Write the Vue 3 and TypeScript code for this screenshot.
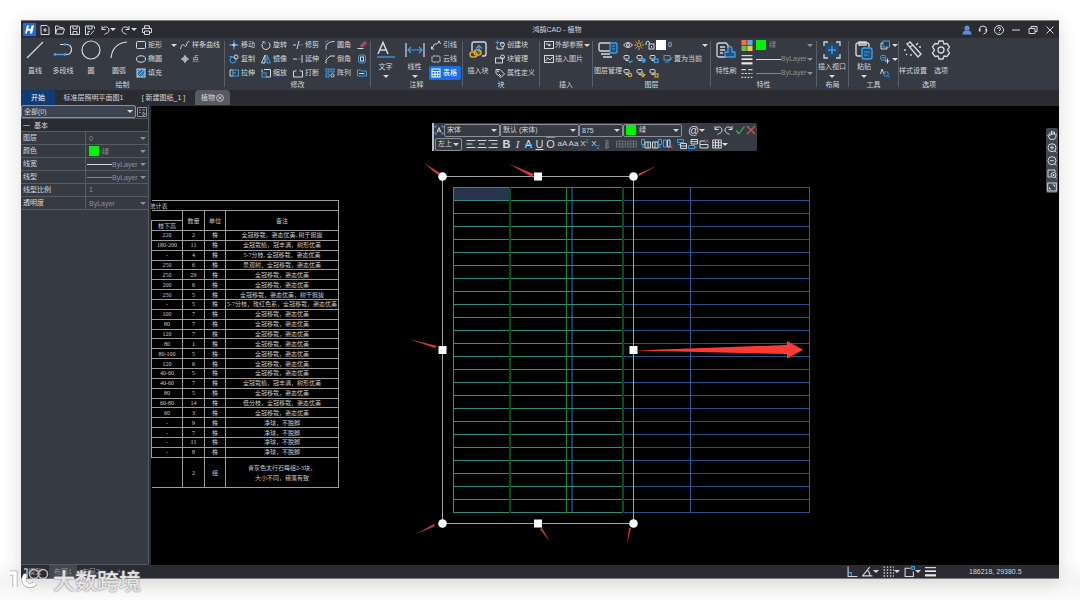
<script setup lang="ts">
interface Cmd { icon: string; label: string; caret?: boolean; active?: boolean }

const B = '#3b9fe8'
const Y = '#d9a63a'

const stack = (color: string, mark: string) =>
  `<rect x="1" y="1.5" width="5" height="3.5" rx="1"/><path d="M2.5 6.5h3"/><g stroke="${color}">${mark}</g>`

const icons: Record<string, string> = {
  line: `<path stroke-width="1.2" d="M2 18 18 2"/>`,
  pline: `<path stroke-width="1.2" d="M7 4.5h7a4.5 5 0 0 1 0 10H2"/><g fill="${B}" stroke="none"><circle cx="12" cy="4.5" r="1.3"/><circle cx="2" cy="14.5" r="1.4"/><circle cx="12" cy="14.5" r="1.4"/></g><path stroke="${B}" stroke-width="1.5" d="M2 14.5h10"/>`,
  circle: `<circle cx="10" cy="10" r="9" stroke-width="1.2"/>`,
  arc: `<path stroke-width="1.2" d="M2 18C3 9 8 3 18 2"/>`,
  rect: `<rect x=".5" y="1.5" width="9" height="7" rx="1"/>`,
  ellipse: `<ellipse cx="5" cy="5" rx="4.5" ry="3.2"/>`,
  hatch: `<rect x="1" y="1" width="8" height="8" fill="#2474ad"/><path stroke="#9fd0f5" stroke-width=".7" d="M1 5l4-4M1 9l8-8M5 9l4-4"/>`,
  spline: `<path d="M.5 9C3-1 5 10 6.5 5S8 2 9.5 1.500"/>`,
  point: `<circle cx="5" cy="5" r="2.2"/><path d="M5 1v8M1 5h8"/>`,
  move: `<path stroke="${B}" d="M5 .5v9M.5 5h9" stroke-width="1.3"/><path d="M5 3v4M3 5h4"/>`,
  rotate: `<path d="M3 2a4 4 0 1 0 4.5.3"/><path stroke="${B}" d="M1 1.500h3v3"/>`,
  trim: `<path d="M0 5h3M6 1 4 9"/><path stroke="${B}" stroke-dasharray="1.5 1" d="M6 5h4"/>`,
  fillet: `<path d="M1 9.500V8C1 4 4 1.500 9.500 1.500"/><path stroke="${B}" stroke-dasharray="1.5 1" d="M1 5V1h3"/>`,
  chamfer: `<path d="M1 9.500V6l4-4h5"/><path stroke="${B}" stroke-dasharray="1 1" d="M1 4V2h2"/>`,
  copy: `<circle cx="4" cy="6" r="3" stroke="${B}"/><circle cx="7" cy="3" r="2"/><path stroke="${B}" d="M.5 2.500h3"/>`,
  mirror: `<path d="M4 1v8H.5z"/><path stroke="${B}" d="M6 1v8h3.500z"/>`,
  extend: `<path d="M0 5h4M9 1v8"/><path stroke="${B}" stroke-dasharray="1.5 1" d="M5 5h4"/>`,
  offset: `<rect x="1.5" y="1" width="7" height="8" rx="2" stroke="${B}"/><rect x="3.5" y="3" width="3" height="4"/>`,
  stretch: `<path d="M4 2H1v6h3"/><rect x="4" y="2" width="5.5" height="6" stroke="${B}"/><path stroke="${B}" d="M3 5h4"/>`,
  scale: `<path d="M3 1.500h6.500V9H5"/><path d="M1 4V1.500"/><rect x="1" y="5" width="4" height="4" stroke="${B}"/>`,
  break: `<path d="M3 3H.5v6h9V3H7"/><path stroke="${B}" d="M3 1.500v2M7 1.500v2"/>`,
  array: `<g stroke="${B}"><rect x="1" y="1" width="3" height="3"/><rect x="6" y="1" width="3" height="3"/><rect x="1" y="6" width="3" height="3"/></g><circle cx="7.5" cy="7.5" r="1.6"/>`,
  erase: `<path stroke="#d8437c" fill="#a83a68" d="M3.500 6 7.500 1.500l2 1.500L5.500 7z"/><path d="M.5 8.500h6"/>`,
  folder: `<path stroke="${B}" d="M.5 8V2h3l1 1h5v5z"/><path d="M2 5.500h5.500"/>`,
  text: `<path stroke-width="1.5" d="M2 14 7 2.500 12 14M4 10h6"/><path stroke="${B}" stroke-width="1.3" d="M1 17h18"/>`,
  linear: `<path stroke-width="1.2" d="M1 3v14M19 3v14"/><path stroke="${B}" stroke-width="1.2" d="M3 10h14M6 7l-3 3 3 3M14 7l3 3-3 3"/>`,
  leader: `<path d="M1 8.500 3.500 4 6 4M6.500 4 8 .8 9.500 4"/><path d="M.5 6.500V9H3"/>`,
  cloud: `<rect x="1" y="2" width="8" height="6" rx="1" stroke-dasharray="2.5 .7"/>`,
  table: `<rect x="1" y="1" width="8" height="8" stroke="#fff"/><path stroke="#fff" d="M1 3.500h8M4 3.500V9M6.500 3.500V9M1 6.300h8"/>`,
  insblock: `<path stroke-width="1.4" d="M4 11V4q0-2 2-2h10q2 0 2 2v10q0 2-2 2h-2"/><path stroke="${B}" stroke-width="1.4" d="M11 13V6M8 8.500 11 5.500l3 3"/><g stroke="${Y}" stroke-width="1.5"><rect x="2" y="12" width="7" height="5" rx="2.5"/><rect x="6" y="10" width="7" height="5" rx="2.5"/></g>`,
  newblock: `<path stroke="${B}" d="M2.500.5v4M.5 2.500h4"/><path d="M2 6v3h6V6M5 3h4"/><circle cx="7.5" cy="4.5" r="2"/>`,
  blockmgr: `<rect x=".5" y="4" width="7" height="5"/><circle cx="7.5" cy="3" r="2"/>`,
  tag: `<path d="M1 1.500h4l4.500 4.500-3.500 3.500L1 5.500z"/><circle cx="3" cy="3.3" r=".6"/><path d="M4 6l2 2"/>`,
  xref: `<rect x=".5" y="1.5" width="9" height="7"/><path d="M2 4h2M4 5l2-1v2z"/>`,
  image: `<rect x=".5" y="1.5" width="9" height="7"/><path d="M1.500 7l2.500-3 2 2 2.500-3M2.500 3.300h1"/>`,
  layers: `<rect x="1" y="3" width="12" height="8" rx="1.5" stroke-width="1.4"/><path stroke-width="1.3" d="M3 14h9M5 17h9"/><rect x="12" y="3" width="7" height="10" rx="1" fill="#234d70" stroke="${B}" stroke-width="1.3"/><path stroke="${B}" d="M14 6h3M14 9h3"/>`,
  eye: `<path d="M.5 5Q5 0 9.500 5 5 10 .5 5z"/><circle cx="5" cy="5" r="1.5"/>`,
  sun: `<g stroke="${Y}"><circle cx="5" cy="5" r="2"/><path d="M5 0v2M5 8v2M0 5h2M8 5h2M1.500 1.500l1.300 1.300M7.200 7.200l1.300 1.300M8.500 1.500 7.200 2.800M2.800 7.200 1.500 8.500"/></g>`,
  lock: `<path d="M1 5V3a1.500 1.500 0 0 1 3.500 0v1"/><rect x="4" y="4" width="5" height="5"/><path d="M6.500 6v1.500"/>`,
  lyoff: stack(B, '<path stroke-width="1.2" d="M5 6.500q2 3 4.500 0M6 8.500h2"/>'),
  lyfrz: stack(B, `<circle cx="7.500" cy="6.500" r="1.900" fill="${B}"/>`),
  lylock: stack(B, '<rect x="5.5" y="5" width="3.5" height="3.5" stroke-width="1.2"/>'),
  lycur: `<rect x="1" y="1.5" width="6" height="4.5" stroke="${B}"/><path d="M2 8h4" stroke="${B}"/><path stroke="#35c46a" d="M4.500 5 6.500 7 9.500 3"/>`,
  lyon: stack(Y, '<circle cx="7" cy="7" r="1.7" stroke-width="1.2"/>'),
  lythaw: stack(Y, '<circle cx="7" cy="7" r="1.5"/><path d="M7 4.500v5M4.500 7h5"/>'),
  lyunl: stack(Y, '<path d="M5 6V5h2"/><rect x="6" y="6" width="3" height="3" stroke-width="1.2"/>'),
  match: `<path stroke-width="1.3" d="M10 17H3q-2 0-2-2V5q0-2 2-2h7l2 2v3M4 7h5M4 10h5M4 13h3"/><path stroke="${B}" fill="#245277" stroke-width="1.3" d="M9 17v-5h3V8q2-3 4 0v4h3v5z"/>`,
  palette: `<g stroke="none"><path fill="#f0703a" d="M0 0h4.700v4.700H0z"/><path fill="#5aa9e8" d="M5.300 0H10v4.700H5.300z"/><path fill="#6bbf5b" d="M0 5.300h4.700V10H0z"/><path fill="#f1c644" d="M5.300 5.300H10V10H5.300z"/></g>`,
  lweight: `<path stroke="#e8eaed" d="M0 1.500h10"/><path stroke="#e8eaed" stroke-width="1.5" d="M0 4.700h10"/><path stroke="#e8eaed" stroke-width="2" d="M0 8.500h10"/>`,
  ltype: `<path d="M0 1.500h4M6 1.500h4"/><path stroke-dasharray="2 1" d="M0 5h10"/><path stroke-dasharray="1.5 1.3" d="M0 8.500h10"/>`,
  viewport: `<rect x="3" y="3" width="14" height="14" fill="#244a69" stroke="none"/><path stroke="${B}" stroke-width="1.4" d="M10 6v8M6 10h8"/><path stroke-width="1.3" d="M2 6V2h4M14 2h4v4M18 14v4h-4M6 18H2v-4"/>`,
  paste: `<path stroke-width="1.4" d="M7 16H4q-2 0-2-2V5q0-2 2-2h9q2 0 2 2v2M5 2h7v3H5z"/><rect x="8" y="8" width="10" height="11" rx="2" fill="#244f74" stroke="${B}" stroke-width="1.4"/><path stroke="${B}" d="M10 12h6M10 15h4"/>`,
  dup: `<rect x="3" y="1" width="6.5" height="6" stroke="${B}"/><path d="M3 3H1v6h6V7"/>`,
  cut: `<rect x=".7" y="1.5" width="5" height="4.5" rx="1" stroke="${B}"/><path stroke="${B}" d="M2 3.700h3"/><path d="M5 7h4.500M7.500 4.500v5"/>`,
  find: `<path d="M.5 6 2 1l2 5"/><circle cx="6" cy="6" r="2.3" stroke="${B}"/><path stroke="${B}" d="M8 8l1.500 1.500"/>`,
  wand: `<path stroke-width="1.4" d="M4 4 7 2l11 12-3 3zM7 7l3-2"/><path stroke-width="1.4" d="M13 5l2-2M16 7h2M2 9v2M4 14l-1 1M8 14v2"/>`,
  gear: `<path stroke-width="1.3" d="M8 1h4l1 3 3-.5 2.500 3.500-2 3 2 3L16 16.500l-3-.5-1 3H8l-1-3-3 .5L1.500 13l2-3-2-3L4 3.500 7 4z"/><circle cx="10" cy="10" r="3" stroke-width="1.3"/>`,
  logo: `<rect width="10" height="10" rx=".6" fill="#2466de" stroke="none"/><path fill="#fff" stroke="none" d="M3 2h1.600L4 4.500h2L6.600 2h1.900L7 8H5.300l.4-2H3.500L3 8H1.500z"/>`,
  newf: `<path d="M1 .5h6l2 2v7H1zM5 3v4M3 5h4"/>`,
  open: `<path d="M.5 9V1h3l1 1.500H8V4M.5 9 2 4h7.500L8 9z"/>`,
  save: `<path d="M.5 1h8l1 1v7.500h-9zM3 1v3h4V1M3 9V6.500h4V9"/>`,
  saveas: `<path d="M4 9.500H.5V1h8l1 1v2M3 1v3h4V1M3 9V6.500h2M5.500 9.500 9 5.500"/>`,
  undo: `<path d="M2 1v3.500h3.500M2 4.500C4 .5 9 1.500 9 5S6 8 4.500 9.500"/>`,
  redo: `<path d="M8 1v3.500H4.500M8 4.500C6 .5 1 1.500 1 5s3 3 4.500 4.500"/>`,
  print: `<path d="M2.500 3.500V.8h5v2.700M2.500 7.500H.5v-4h9v4h-2M2.500 6h5v3.500h-5z"/>`,
  user: `<g fill="#5b8fd6" stroke="none"><circle cx="5" cy="3" r="2.6"/><path d="M.5 9.500q0-3.500 3-4h3q3 .5 3 4z"/></g>`,
  headset: `<path d="M1.500 6V4.500a3.500 3.500 0 0 1 7 0V6q0 2.500-3 3"/><path stroke-width="1.8" d="M1.700 4v2.500M8.300 4v2.500"/>`,
  help: `<circle cx="5" cy="5" r="4.5"/><path d="M3.500 4q0-1.500 1.500-1.500T6.500 4 5 5.800M5 7v.8"/>`,
  min: `<path d="M1 5h8"/>`,
  restore: `<path d="M1 3.500h6v5H1zM3 3.500v-2h6v5H7"/>`,
  close: `<path d="M1.500 1.500l7 7M8.500 1.500l-7 7"/>`,
  tabx: `<circle cx="5" cy="5" r="4.3"/><path d="M3 3l4 4M7 3 3 7"/>`,
  filter: `<path stroke="#8f949c" d="M.5.500h9v9h-9zM2 3h2M5.500 3H8M2 5.500h2M6 5l2.500 2L6 8.500z"/>`,
  hand: `<path d="M3 6V2.500M4.500 5V1M6 5V1M7.500 5V2M3 6 1.500 4.500.8 5.200 3 9.300h4.500Q9.300 8 9.200 3.500"/>`,
  zin: `<circle cx="5" cy="4.7" r="4"/><path d="M5 2.700v4M3 4.700h4M7.800 7.800l1.700 1.700"/>`,
  zout: `<circle cx="5" cy="4.7" r="4"/><path d="M3 4.700h4M7.800 7.800l1.700 1.700"/>`,
  zwin: `<path d="M4 8H1V1h7v2"/><circle cx="6.5" cy="6" r="2.5"/><path d="M6.500 5v2M5.500 6h2M8.300 8 9.700 9.500"/>`,
  zext: `<rect x=".7" y="1" width="8.6" height="8"/><path d="M5.800 3h1.700v1.700M4.200 7H2.500V5.300"/>`,
  tA: `<path stroke="${B}" d="M3 1H1v2M7 1h2v2M9 7v2H7M3 9H1V7"/><path d="M3 7.500 5 2.500l2 5M3.700 6h2.600"/>`,
  alL: `<path d="M.5 1.500h9M.5 5h6M.5 8.500h9"/>`,
  alC: `<path d="M.5 1.500h9M2 5h6M.5 8.500h9"/>`,
  alR: `<path d="M.5 1.500h9M3.500 5h6M.5 8.500h9"/>`,
  frac: `<g stroke="#7d828b"><circle cx="5" cy="2.5" r="1.3"/><path d="M3 5h4M4 6v3.500"/><circle cx="5.300" cy="8" r="1.2"/></g>`,
  merge: `<path stroke="#676c75" d="M.5 2h9v6h-9zM.5 5h9M3.500 2v6M6.500 2v6"/>`,
  colL: `<path stroke="${B}" d="M.5.500h3v5h-3zM2 5.500V9"/><path d="M4 3h5.500v6H4zM7 3v6"/>`,
  colR: `<path d="M.5 3H6v6H.5zM3 3v6"/><path stroke="${B}" d="M6.500.5h3v5h-3zM8 6v3"/>`,
  colX: `<path stroke="${B}" d="M.5 1h3v7h-3z"/><path d="M4.500 1H7v7H4.500z"/><path stroke="#d9574f" d="M6 6l3.500 3.500M9.500 6 6 9.500"/>`,
  rowA: `<path stroke="${B}" d="M.5.500h6v3h-6zM1 5.500h2"/><path d="M3.500 4.500h6v5h-6zM3.500 7h6"/>`,
  rowB: `<path d="M3 .5h6.500v4.500H3zM3 2.700h6.500"/><path stroke="${B}" d="M.5 6.500h6v3h-6zM8 7v2"/>`,
  rowX: `<path d="M1 2h5M1 2v7h8V5.500H1"/><path stroke="#d9574f" d="M6 .5 9.500 4M9.500.5 6 4"/>`,
  grid: `<path d="M.7 1h8.600v8H.7zM.7 3.700h8.600M.7 6.300h8.600M3.500 1v8M6.500 1v8"/>`,
  ok: `<path stroke="#3fae62" stroke-width="1.2" d="M1 5.500 4 8.500 9.500 1.500"/>`,
  no: `<path stroke="#cf5a4c" stroke-width="1.2" d="M1 1l8 8M9 1 1 9"/>`,
  ortho: `<path d="M1 .5v9h8.500"/><path stroke="${B}" d="M1 6h3v3"/>`,
  polar: `<path d="M9.500 9H.5L7 1"/><path d="M5 4q2.500 2 2 5"/>`,
  dots: `<path stroke-width="1.3" stroke-dasharray="1.3 1.600" d="M.5 1h10M.5 3.700h10M.5 6.400h10M.5 9.100h10"/>`,
  snap: `<path d="M6 2H1v7.500h7.500V5"/><rect x="7" y=".5" width="2.5" height="2.5" stroke="${B}"/>`,
}

const c = (icon: string, label: string, caret = false, active = false): Cmd => ({ icon, label, caret, active })

const quick = [
  c('newf', '新建'), c('open', '打开'), c('save', '保存'), c('saveas', '另存为'),
  c('undo', '撤销', true), c('redo', '重做', true), c('print', '打印'),
]
const winBtns = [
  c('user', '用户'), c('headset', '客服'), c('help', '帮助'), c('min', '最小化'), c('restore', '还原'), c('close', '关闭'),
]

interface Group { name: string; key: string; big: Cmd[]; cols: Cmd[][] }
const groups: Group[] = [
  { name: '绘制', key: 'draw', big: [c('line', '直线'), c('pline', '多段线'), c('circle', '圆'), c('arc', '圆弧')],
    cols: [[c('rect', '矩形', true), c('ellipse', '椭圆'), c('hatch', '填充')], [c('spline', '样条曲线'), c('point', '点')]] },
  { name: '修改', key: 'modify', big: [],
    cols: [[c('move', '移动'), c('copy', '复制'), c('stretch', '拉伸')], [c('rotate', '旋转'), c('mirror', '镜像'), c('scale', '缩放')],
      [c('trim', '修剪'), c('extend', '延伸'), c('break', '打断')], [c('fillet', '圆角'), c('chamfer', '倒角'), c('array', '阵列')],
      [c('erase', ''), c('offset', ''), c('folder', '')]] },
  { name: '注释', key: 'note', big: [c('text', '文字', true), c('linear', '线性', true)],
    cols: [[c('leader', '引线'), c('cloud', '云线'), c('table', '表格', false, true)]] },
  { name: '块', key: 'block', big: [c('insblock', '插入块')],
    cols: [[c('newblock', '创建块'), c('blockmgr', '块管理'), c('tag', '属性定义')]] },
  { name: '插入', key: 'insert', big: [], cols: [[c('xref', '外部参照', true), c('image', '插入图片')]] },
  { name: '图层', key: 'layer', big: [c('layers', '图层管理')], cols: [] },
  { name: '特性', key: 'props', big: [c('match', '特性刷')], cols: [] },
  { name: '布局', key: 'layout', big: [c('viewport', '插入视口', true)], cols: [] },
  { name: '工具', key: 'tools', big: [c('paste', '粘贴', true)], cols: [[c('dup', '', true), c('cut', '', true), c('find', '')]] },
  { name: '选项', key: 'options', big: [c('wand', '样式设置'), c('gear', '选项')], cols: [] },
]

const tabs = [
  { t: '开始', k: 'home' }, { t: '标准层照明平面图1', k: 'plan' }, { t: '[ 新建图纸_1 ]', k: 'fresh' }, { t: '植物', k: 'current' },
]

const rows: [string, string, string][] = [
  ['220', '2', '全冠移栽，姿态优美, 树干挺拔'], ['180-200', '11', '全冠栽植，冠丰满，树形优美'],
  ['-', '4', '5-7分枝, 全冠移栽，姿态优美'], ['250', '6', '景观树，全冠移栽，姿态优美'],
  ['250', '29', '全冠移栽，姿态优美'], ['200', '6', '全冠移栽，姿态优美'],
  ['250', '5', '全冠移栽，姿态优美，树干挺拔'], ['-', '5', '5-7分枝，玫红色系，全冠移栽，姿态优美'],
  ['100', '7', '全冠移栽，姿态优美'], ['80', '7', '全冠移栽，姿态优美'], ['120', '7', '全冠移栽，姿态优美'],
  ['80', '1', '全冠移栽，姿态优美'], ['80-100', '5', '全冠移栽，姿态优美'], ['120', '6', '全冠移栽，姿态优美'],
  ['40-60', '5', '全冠移栽，姿态优美'], ['40-60', '7', '全冠栽植，冠丰满，树形优美'], ['80', '5', '全冠移栽，姿态优美'],
  ['60-80', '14', '低分枝，全冠移栽，姿态优美'], ['60', '3', '全冠移栽，姿态优美'],
  ['-', '9', '净球，不脱脚'], ['-', '7', '净球，不脱脚'], ['-', '11', '净球，不脱脚'], ['-', '8', '净球，不脱脚'],
]

const gridY = Array.from({ length: 26 }, (_, i) => 187.5 + i * 13)
const corners = [[442.5, 176.5], [633.5, 176.5], [442.5, 523.5], [633.5, 523.5]]
const mids = [[538, 176.5], [442.5, 350], [633.5, 350], [538, 523.5]]
const marks = [
  '424,163 440,173 438,175', '509,164 534,174 532,177', '656,166 638,174 639,176', '409,339 437,346 435,348',
  '416,534 434,524 435,526', '550,542 540,529 542,528', '627,544 629,528 631,528',
]

const alignTools = [c('alL', '左对齐'), c('alC', '居中'), c('alR', '右对齐')]
const cellTools: string[][] = [['merge', 'merge'], ['colL', 'colR', 'colX'], ['rowA', 'rowB', 'rowX']]
const navTools = [c('hand', '平移'), c('zin', '放大'), c('zout', '缩小'), c('zwin', '窗口缩放'), c('zext', '全图')]
const statusTools = [c('ortho', '正交'), c('polar', '极轴', true), c('dots', '栅格', true), c('snap', '捕捉', true), c('lweight', '线宽')]
</script>

<template>
  <div class="page">
    <div class="window">
      <header class="titlebar">
        <svg class="logo" viewBox="0 0 10 10" v-html="icons.logo" />
        <nav class="quick">
          <button v-for="q in quick" :key="q.icon" :aria-label="q.label">
            <svg class="ico" viewBox="0 0 10 10" v-html="icons[q.icon]" /><i v-if="q.caret" class="caret" />
          </button>
        </nav>
        <h1>鸿鹄CAD - 植物</h1>
        <nav class="winbtns">
          <button v-for="q in winBtns" :key="q.icon" :aria-label="q.label">
            <svg class="ico" viewBox="0 0 10 10" v-html="icons[q.icon]" />
          </button>
        </nav>
      </header>

      <section class="ribbon">
        <div v-for="g in groups" :key="g.key" class="group" :class="g.key">
          <div class="body">
            <button v-for="b in g.big" :key="b.icon" class="big" :class="{ drop: b.caret }">
              <svg viewBox="0 0 20 20" v-html="icons[b.icon]" /><span>{{ b.label }}</span><i v-if="b.caret" class="caret" />
            </button>
            <div v-for="(col, ci) in g.cols" :key="ci" class="col">
              <button v-for="s in col" :key="s.icon" class="small" :class="{ active: s.active }" :aria-label="s.label || s.icon">
                <svg class="ico" viewBox="0 0 10 10" v-html="icons[s.icon]" /><span v-if="s.label">{{ s.label }}</span><i v-if="s.caret" class="caret" />
              </button>
            </div>
            <div v-if="g.key === 'layer'" class="extra">
              <div class="line">
                <button v-for="n in ['eye', 'sun', 'lock']" :key="n" class="mini" :aria-label="n"><svg class="ico" viewBox="0 0 10 10" v-html="icons[n]" /></button>
                <i class="swatch white" />
                <span class="sel"><select aria-label="当前图层"><option>0</option></select><i class="caret" /></span>
              </div>
              <div class="line spread">
                <button v-for="n in ['lyoff', 'lyfrz', 'lylock']" :key="n" class="mini" :aria-label="n"><svg class="ico" viewBox="0 0 10 10" v-html="icons[n]" /></button>
                <button class="small"><svg class="ico" viewBox="0 0 10 10" v-html="icons.lycur" /><span>置为当前</span></button>
              </div>
              <div class="line spread">
                <button v-for="n in ['lyon', 'lythaw', 'lyunl']" :key="n" class="mini" :aria-label="n"><svg class="ico" viewBox="0 0 10 10" v-html="icons[n]" /></button>
              </div>
            </div>
            <div v-if="g.key === 'props'" class="extra dim">
              <div class="line"><svg class="ico wide" viewBox="0 0 10 10" v-html="icons.palette" /><i class="swatch green" />
                <span class="sel"><select aria-label="颜色"><option>绿</option></select><i class="caret" /></span></div>
              <div class="line"><svg class="ico wide" viewBox="0 0 10 10" v-html="icons.lweight" /><i class="rule bright" />
                <span class="sel"><select aria-label="线宽"><option>ByLayer</option></select><i class="caret" /></span></div>
              <div class="line"><svg class="ico wide" viewBox="0 0 10 10" v-html="icons.ltype" /><i class="rule" />
                <span class="sel"><select aria-label="线型"><option>ByLayer</option></select><i class="caret" /></span></div>
            </div>
          </div>
          <div class="name">{{ g.name }}</div>
        </div>
      </section>

      <nav class="tabs">
        <button v-for="t in tabs" :key="t.k" :class="t.k">{{ t.t }}<svg v-if="t.k === 'current'" class="tabx" viewBox="0 0 10 10" v-html="icons.tabx" /></button>
      </nav>

      <main class="work">
        <aside class="side">
          <div class="pick">
            <span class="sel box"><select aria-label="选择集"><option>全部(0)</option></select><i class="caret" /></span>
            <button aria-label="快速选择"><svg class="ico" viewBox="0 0 10 10" v-html="icons.filter" /></button>
          </div>
          <div class="cat"><span>一</span> 基本</div>
          <div class="prop"><label for="p1">图层</label><span class="sel"><select id="p1"><option>0</option></select><i class="caret" /></span></div>
          <div class="prop"><label for="p2">颜色</label><span class="sel"><i class="swatch green" /><select id="p2"><option>绿</option></select><i class="caret" /></span></div>
          <div class="prop"><label for="p3">线宽</label><span class="sel tight"><i class="rule bright" /><select id="p3"><option>ByLayer</option></select><i class="caret" /></span></div>
          <div class="prop"><label for="p4">线型</label><span class="sel tight"><i class="rule" /><select id="p4"><option>ByLayer</option></select><i class="caret" /></span></div>
          <div class="prop"><label for="p5">线型比例</label><span class="sel"><input id="p5" type="text" value="1" /></span></div>
          <div class="prop"><label for="p6">透明度</label><span class="sel"><select id="p6"><option>ByLayer</option></select><i class="caret" /></span></div>
        </aside>

        <div class="canvas">
          <table class="plants">
            <colgroup><col class="c1" /><col class="c2" /><col class="c3" /><col /></colgroup>
            <tbody>
              <tr class="fixed"><td colspan="4" class="ttl">统计表</td></tr>
              <tr class="fixed"><td class="open" /><th rowspan="2">数量</th><th rowspan="2">单位</th><th rowspan="2">备注</th></tr>
              <tr class="fixed"><th>枝下高</th></tr>
              <tr v-for="(r, i) in rows" :key="i"><td>{{ r[0] }}</td><td>{{ r[1] }}</td><td>株</td><td>{{ r[2] }}</td></tr>
              <tr class="last"><td class="open" /><td>2</td><td>组</td><td>青灰色太行石每组2-3块，<br />大小不同，错落有致</td></tr>
            </tbody>
          </table>

          <svg class="drawing" viewBox="400 150 420 400">
            <rect x="454" y="188" width="56" height="12" fill="#26354d" />
            <g stroke="#26508a">
              <path v-for="y in gridY" :key="y" :d="`M623 ${y}H809`" />
              <path d="M690.5 187V513M809.5 187V513" stroke="#2a5c9c" />
              <path d="M572 187V513" stroke="#17385c" stroke-width="2" />
            </g>
            <g stroke="#2f8d80">
              <path v-for="y in gridY" :key="y" :d="`M453 ${y}H623`" />
              <path d="M453.5 187V513" />
            </g>
            <path d="M510 187V513M623 187V513" stroke="#075010" stroke-width="2" />
            <path d="M566.5 187V513" stroke="#0f8a22" />
            <rect x="442.5" y="176.5" width="191" height="347" fill="none" stroke="#a3a3a3" />
            <circle v-for="(p, i) in corners" :key="i" :cx="p[0]" :cy="p[1]" r="4.3" fill="#fff" />
            <rect v-for="(p, i) in mids" :key="i" :x="p[0] - 4" :y="p[1] - 4" width="8" height="8" fill="#fff" />
            <polygon v-for="m in marks" :key="m" :points="m" fill="#d93632" />
            <polygon points="634,350.5 787,345 787,341 803,349.7 787,358.5 787,354" fill="#fb3a36" />
          </svg>

          <div class="editor">
            <div class="erow">
              <svg class="ico" viewBox="0 0 10 10" v-html="icons.tA" />
              <span class="sel box font"><select aria-label="字体"><option>宋体</option></select><i class="caret" /></span>
              <span class="sel box style"><select aria-label="文字样式"><option>默认 (宋体)</option></select><i class="caret" /></span>
              <span class="sel box size"><input type="text" aria-label="字高" value="875" /><i class="caret" /></span>
              <span class="sel box hue"><i class="swatch green" /><select aria-label="文字颜色"><option>绿</option></select><i class="caret" /></span>
              <button class="at">@<i class="caret" /></button>
              <span class="set">
                <button v-for="n in ['undo', 'redo', 'ok', 'no']" :key="n" :aria-label="n"><svg class="ico" viewBox="0 0 10 10" v-html="icons[n]" /></button>
              </span>
            </div>
            <div class="erow">
              <span class="sel box align"><select aria-label="对正"><option>左上</option></select><i class="caret" /></span>
              <span class="set">
                <button v-for="b in alignTools" :key="b.icon" :aria-label="b.label"><svg class="ico" viewBox="0 0 10 10" v-html="icons[b.icon]" /></button>
              </span>
              <span class="set letters">
                <button class="b">B</button><button class="i">I</button><button class="s">A</button><button class="u">U</button><button class="o">O</button>
              </span>
              <span class="set cases">
                <button>aA</button><button>Aa</button><button>X<sup>2</sup></button><button>X<sub>2</sub></button>
                <button aria-label="堆叠"><svg class="ico" viewBox="0 0 10 10" v-html="icons.frac" /></button>
              </span>
              <span v-for="(s, i) in cellTools" :key="'c' + i" class="set">
                <button v-for="(n, j) in s" :key="j" :aria-label="n + j"><svg class="ico" viewBox="0 0 10 10" v-html="icons[n]" /></button>
              </span>
              <button class="gridbtn" aria-label="边框"><svg class="ico" viewBox="0 0 10 10" v-html="icons.grid" /><i class="caret" /></button>
            </div>
          </div>

          <nav class="navbar">
            <button v-for="n in navTools" :key="n.icon" :aria-label="n.label"><svg class="ico" viewBox="0 0 10 10" v-html="icons[n.icon]" /></button>
          </nav>
        </div>
      </main>

      <footer class="status">
        <div class="sheets"><button>模型</button><button class="on">布局1</button><button>布局2</button><button>+</button></div>
        <div class="stools">
          <button v-for="n in statusTools" :key="n.icon" :aria-label="n.label"><svg class="ico" viewBox="0 0 10 10" v-html="icons[n.icon]" /><i v-if="n.caret" class="caret" /></button>
        </div>
        <output>186218, 29380.5</output>
      </footer>
    </div>

    <div class="watermark">
      <svg viewBox="0 0 42 28">
        <g fill="none" stroke="#a5a5a5" stroke-width="5"><path d="M1 8h5v14M18 11h-2a6 6 0 1 0 10 7" /></g>
        <g fill="none" stroke="#fff" stroke-width="3.5"><path d="M1 8h5v14M18 11h-2a6 6 0 1 0 10 7" /></g>
        <g fill="none" stroke="#b9bbbe" stroke-width="1.5"><path d="M15 4h3v9" /><circle cx="25" cy="9" r="4.5" /><circle cx="34" cy="9" r="4.5" /></g>
      </svg>
      <span>大数跨境</span>
    </div>
  </div>
</template>

<style>
body { margin: 0; background: #fff; }
</style>

<style scoped>
.page {
  position: relative;
  display: flex;
  min-height: 100vh;
  box-sizing: border-box;
  padding: 20px 21px 21px;
  background: linear-gradient(#fff 93%, #f5f5f5 97%, #fcfcfc);
  font: 7px/10px "Liberation Sans", "Noto Sans CJK SC", sans-serif;
  color: #d4d7dc;
}
.page * { box-sizing: border-box; }
.window {
  flex: 1;
  min-width: 0;
  display: flex;
  flex-direction: column;
  background: #2b2c31;
  border-top: 1px solid #77797d;
  box-shadow: 0 3px 18px rgba(0, 0, 0, 0.14);
}
button, select, input {
  appearance: none;
  border: 0;
  margin: 0;
  padding: 0;
  background: none;
  color: inherit;
  font: inherit;
  white-space: nowrap;
}
button { display: flex; align-items: center; }
select, input { flex: 1; min-width: 0; width: 100%; height: 11px; outline: 0; }
svg { fill: none; stroke: #d4d7dc; stroke-width: 1; display: block; flex: none; }
.ico { width: 10px; height: 10px; }
.caret {
  flex: none;
  border: 3px solid transparent;
  border-top-color: currentColor;
  border-bottom: 0;
}
.swatch { flex: none; width: 10px; height: 10px; }
.white { background: #fff; }
.green { background: #00f500; }
.rule { flex: none; width: 25px; height: 1px; background: #7f838a; }
.rule.bright { background: #d4d7dc; }
.sel { display: flex; align-items: center; min-width: 0; }

.titlebar { display: flex; align-items: center; height: 17px; padding: 0 4px 0 2px; }
.logo { width: 13px; height: 13px; }
.quick { display: flex; gap: 5px; margin-left: 4px; }
h1 { flex: 1; margin: 0; text-align: center; font-size: 7px; font-weight: 400; }
.winbtns { display: flex; gap: 6px; }
.winbtns button:nth-child(n + 4) { margin-left: 1px; }

.ribbon { display: flex; height: 52px; background: #363a42; }
.group { flex: none; border-right: 1px solid transparent; border-image: linear-gradient(transparent 8%, #5a5e66 8%, #5a5e66 92%, transparent 92%) 1; }
.group:last-child { border: 0; }
.body { display: flex; height: 42px; }
.name { text-align: center; line-height: 10px; }
.draw { width: 204px; }
.modify { width: 146px; }
.note { width: 92px; }
.block { width: 77px; }
.insert { width: 53px; }
.layer { width: 118px; }
.props { width: 106px; }
.layout { width: 32px; }
.tools { width: 50px; }
.options { width: 60px; }
.big { flex: none; width: 28px; flex-direction: column; padding-top: 2px; }
.big svg { width: 20px; height: 20px; }
.big span { margin-top: 6px; }
.big.drop span { margin-top: 2px; }
.big .caret { margin-top: 3px; }
.note .big { width: 29px; }
.block .big, .layer .big, .layout .big, .props .big, .tools .big { width: 30px; }
.col { flex: none; }
.small { gap: 2px; height: 14px; width: 100%; }
.draw .col { margin-left: 3px; width: 41px; }
.draw .small .caret { margin-left: auto; }
.modify .body { padding-left: 4px; }
.modify .col { width: 32px; }
.note .small { padding: 0 2px; width: 32px; }
.small.active { background: #1a70e3; border-radius: 2px; color: #fff; }
.block .col { padding-left: 2px; }
.insert .body { padding-left: 4px; }
.insert .small { gap: 1px; }
.tools .small { padding-left: 1px; }
.extra { flex: 1; min-width: 0; padding-right: 2px; }
.line { display: flex; align-items: center; height: 14px; gap: 3px; }
.line .sel { flex: 1; }
.layer .line { gap: 1px; }
.layer .line.spread { gap: 3px; }
.layer .line .small { margin-left: 1px; width: auto; gap: 1px; }
.layer .line .sel { padding-left: 1px; }
.dim { color: #8b8f97; padding-right: 3px; }
.dim .ico { width: 12px; height: 11px; }
.dim .line .rule + .sel { margin-left: -3px; }

.tabs { display: flex; height: 15px; }
.tabs button { justify-content: center; height: 15px; }
.home { width: 34px; background: #103c76; border-radius: 3px 3px 0 0; color: #fff; }
.plan { width: 77px; }
.fresh { width: 63px; }
.tabs .current { width: 35px; gap: 1px; background: #575a60; border-radius: 4px 4px 0 0; }
.tabx { width: 8px; height: 8px; }

.work { flex: 1; display: flex; min-height: 0; }
.side { flex: none; width: 128px; background: #363a43; border: 1px solid #555962; border-width: 0 1px 1px 0; border-radius: 0 0 2px 0; }
.pick { display: flex; height: 13px; background: #2b2c31; }
.box { border: 1px solid #8b9098; border-radius: 2px; height: 13px; padding: 0 2px; }
.pick .box { width: 115px; background: #3c4450; }
.pick button { padding-left: 1px; }
.cat { height: 13px; background: #2b2c31; line-height: 13px; padding-left: 2px; border-top: 1px solid #555962; }
.cat span { margin-right: 2px; }
.prop { display: flex; height: 13px; border-top: 1px solid #565b64; line-height: 12px; }
.prop:last-child { height: 14px; border-bottom: 1px solid #565b64; }
.prop label { width: 65px; padding-left: 2px; border-right: 1px solid #565b64; }
.prop .sel { flex: 1; padding: 0 2px 0 3px; color: #8b9098; gap: 3px; }
.prop .sel.tight { gap: 0; padding-left: 1px; }

.canvas { position: relative; flex: 1; min-width: 0; margin: 1px 0 0 2px; background: #000; overflow: hidden; }
.plants {
  position: absolute;
  left: 0;
  top: 94px;
  width: 188px;
  height: 288px;
  table-layout: fixed;
  border-collapse: collapse;
  font: 6px/8px "Liberation Serif", "Noto Sans CJK SC", serif;
  color: #c9c9c9;
  text-align: center;
}
.c1 { width: 31px; }
.c2 { width: 22px; }
.c3 { width: 21px; }
.plants td, .plants th { border: 1px solid #9c9c9c; padding: 0; font-weight: 400; white-space: nowrap; }
.plants .open, .plants .ttl { border-left: 0; }
.plants .ttl { text-align: left; text-indent: -2px; }
.fixed { height: 10px; }
.last { height: 30px; line-height: 10px; }

.drawing { position: absolute; left: 249px; top: 44px; width: 420px; height: 400px; stroke: none; stroke-width: 1; }

.editor { position: absolute; left: 281px; top: 17px; width: 325px; background: #363a42; border-left: 2px solid #b9bcc0; border-radius: 0 2px 2px 0; }
.erow { display: flex; align-items: center; height: 14px; }
.font { width: 56px; }
.style { width: 79px; }
.size { width: 44px; }
.hue { width: 59px; gap: 3px; }
.align { width: 27px; margin: 0 3px 0 1px; }
.at { font-size: 11px; margin-left: 6px; }
.set { display: flex; margin-right: 3px; }
.erow > .set:last-child { margin: 0 1px 0 auto; }
.set button { width: 11px; height: 12px; justify-content: center; }
.letters { font-size: 11px; margin-right: 1px; }
.b { font-weight: 700; }
.i { font-family: "Liberation Serif", serif; font-style: italic; }
.s { text-decoration: line-through #3b9fe8; }
.u { text-decoration: underline; }
.o { text-decoration: overline #3b9fe8; }
.cases { font-size: 8px; }
.cases sup, .cases sub { font-size: 6px; line-height: 6px; color: #3b9fe8; }
.cases sup { align-self: flex-start; }
.cases sub { align-self: flex-end; }

.navbar { position: absolute; right: 1px; top: 22px; width: 12px; background: #43474f; border-radius: 2px; }
.navbar button { height: 13px; width: 12px; justify-content: center; }

.status { display: flex; align-items: center; height: 14px; border-bottom: 1px solid #77797d; }
.sheets { flex: 1; display: flex; height: 100%; color: #8f9298; }
.sheets button { width: 28px; justify-content: center; }
.sheets .on { background: #44474e; }
.stools { display: flex; gap: 4px; }
.stools .ico { width: 11px; height: 11px; }
.status output { width: 123px; padding-left: 33px; white-space: nowrap; }

.watermark { position: absolute; left: 9px; bottom: 7px; display: flex; align-items: center; height: 28px; gap: 2px; }
.watermark svg { width: 42px; height: 28px; }
.watermark span {
  font: 500 22px/24px "Noto Sans CJK SC", sans-serif;
  color: rgba(255, 255, 255, 0.8);
  text-shadow: 0 0 2px #888, 0 0 1px #888;
}
</style>
